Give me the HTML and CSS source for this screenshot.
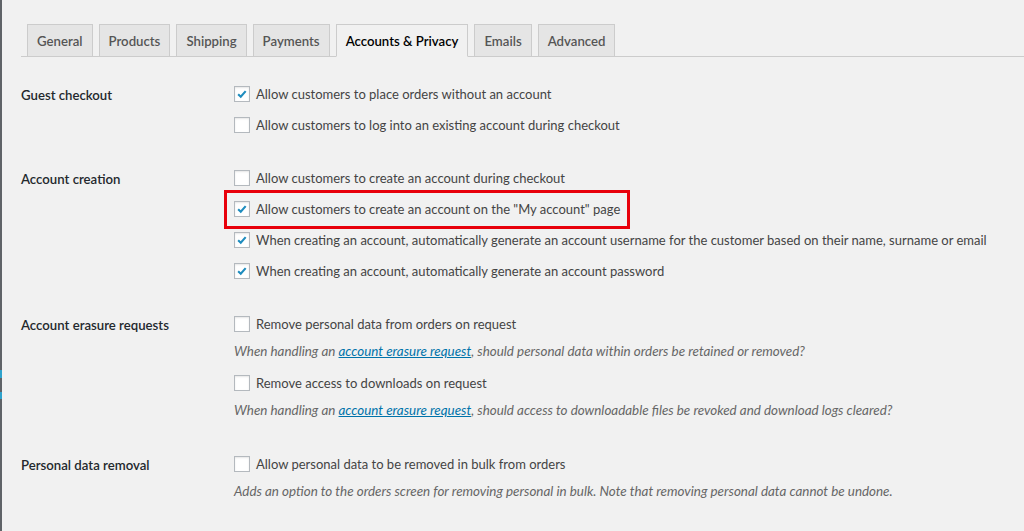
FILE: index.html
```
<!DOCTYPE html>
<html lang="en">
<head>
  <meta charset="UTF-8">
  <title>Accounts &amp; Privacy</title>
  <link rel="stylesheet" href="styles.css">
</head>
<body>
  <div class="wrap">
    <nav class="tabs">
      <a class="tab">General</a>
      <a class="tab">Products</a>
      <a class="tab">Shipping</a>
      <a class="tab">Payments</a>
      <a class="tab active">Accounts &amp; Privacy</a>
      <a class="tab">Emails</a>
      <a class="tab">Advanced</a>
    </nav>

    <div class="settings">
      <section class="row">
        <div class="label">Guest checkout</div>
        <div class="options">
          <label class="opt"><span class="box on"><svg viewBox="0 0 16 16"><path d="M3.6 8.2l3 2.9 5.6-6.4"/></svg></span>Allow customers to place orders without an account</label>
          <label class="opt"><span class="box"></span>Allow customers to log into an existing account during checkout</label>
        </div>
      </section>

      <section class="row">
        <div class="label">Account creation</div>
        <div class="options">
          <label class="opt"><span class="box"></span>Allow customers to create an account during checkout</label>
          <label class="opt"><span class="mark"><span class="box on"><svg viewBox="0 0 16 16"><path d="M3.6 8.2l3 2.9 5.6-6.4"/></svg></span>Allow customers to create an account on the "My account" page</span></label>
          <label class="opt"><span class="box on"><svg viewBox="0 0 16 16"><path d="M3.6 8.2l3 2.9 5.6-6.4"/></svg></span>When creating an account, automatically generate an account username for the customer based on their name, surname or email</label>
          <label class="opt"><span class="box on"><svg viewBox="0 0 16 16"><path d="M3.6 8.2l3 2.9 5.6-6.4"/></svg></span>When creating an account, automatically generate an account password</label>
        </div>
      </section>

      <section class="row">
        <div class="label">Account erasure requests</div>
        <div class="options">
          <label class="opt"><span class="box"></span>Remove personal data from orders on request</label>
          <p class="desc">When handling an <a href="#">account erasure request</a>, should personal data within orders be retained or removed?</p>
          <label class="opt"><span class="box"></span>Remove access to downloads on request</label>
          <p class="desc">When handling an <a href="#">account erasure request</a>, should access to downloadable files be revoked and download logs cleared?</p>
        </div>
      </section>

      <section class="row">
        <div class="label">Personal data removal</div>
        <div class="options">
          <label class="opt"><span class="box"></span>Allow personal data to be removed in bulk from orders</label>
          <p class="desc">Adds an option to the orders screen for removing personal in bulk. Note that removing personal data cannot be undone.</p>
        </div>
      </section>
    </div>
  </div>
</body>
</html>
```

FILE: styles.css
```
html, body {
  margin: 0;
  height: 100%;
}
body {
  background: #f1f1f1;
  border-left: 2px solid #5f6368;
  border-image: linear-gradient(to bottom, #5f6368 370px, #2ea2cc 370px 378px, #5f6368 378px 392px, #2ea2cc 392px 398px, #5f6368 398px) 1;
  font-family: Lato, "Open Sans", sans-serif;
  font-size: 13px;
  color: #444;
  overflow: hidden;
}
.wrap {
  padding: 24px 0 0 19px;
}
.tabs {
  display: flex;
  gap: 6px;
  padding-left: 6px;
  border-bottom: 1px solid #ccc;
  height: 32px;
}
.tab {
  box-sizing: border-box;
  height: 33px;
  padding: 0 9px;
  display: flex;
  align-items: center;
  background: #e5e5e5;
  border: 1px solid #ccc;
  color: #555;
  font-weight: 600;
  font-size: 13.2px;
}
.tab.active {
  background: #f1f1f1;
  border-bottom-color: #f1f1f1;
  color: #000;
}
.settings {
  margin-top: 10px;
}
.row {
  display: grid;
  grid-template-columns: 213px 1fr;
  padding: 11px 0;
}
.label {
  padding-top: 2px;
  font-weight: 600;
  font-size: 13.2px;
  color: #23282d;
  line-height: 31px;
}
.options {
  display: flex;
  flex-direction: column;
}
.opt {
  display: flex;
  align-items: center;
  height: 31px;
  white-space: nowrap;
}
.mark {
  display: flex;
  align-items: center;
  position: relative;
}
.mark::after {
  content: "";
  position: absolute;
  left: -10px;
  right: -10px;
  top: -11px;
  bottom: -12px;
  border: 3px solid #e8000b;
}
.box {
  box-sizing: border-box;
  width: 16px;
  height: 16px;
  margin-right: 6px;
  background: #fff;
  border: 1px solid #b4b9be;
  box-shadow: inset 0 1px 2px rgba(0, 0, 0, .1);
  display: flex;
  align-items: center;
  justify-content: center;
}
.box svg {
  width: 14px;
  height: 14px;
}
.box path {
  fill: none;
  stroke: #1e8cbe;
  stroke-width: 2.4;
}
.desc {
  margin: 0 0 3px;
  line-height: 25px;
  font-size: 13.4px;
  font-style: italic;
  color: #666;
  white-space: nowrap;
}
.desc a {
  color: #0073aa;
}
```
